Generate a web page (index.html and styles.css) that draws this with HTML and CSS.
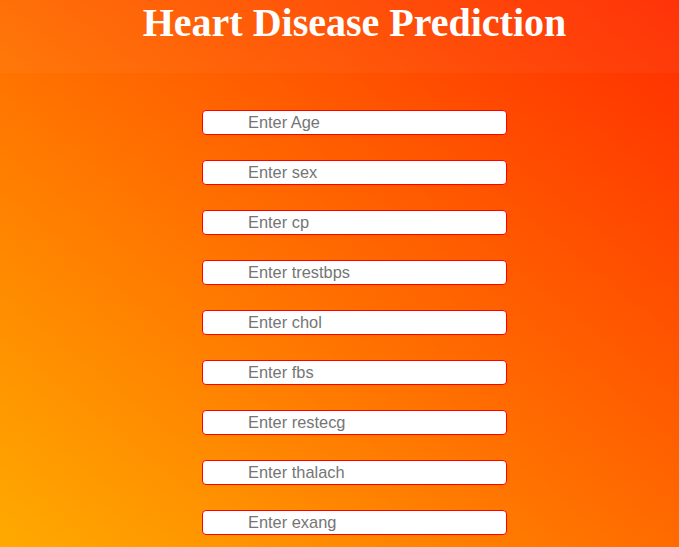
FILE: index.html
```html
<!DOCTYPE html>
<html lang="en">
<head>
<meta charset="utf-8">
<title>Heart Disease Prediction</title>
<link rel="stylesheet" href="styles.css">
</head>
<body>
  <header class="header">
    <h1 class="title">Heart Disease Prediction</h1>
  </header>
  <main class="main">
    <form class="form">
      <input class="field" type="text" placeholder="Enter Age">
      <input class="field" type="text" placeholder="Enter sex">
      <input class="field" type="text" placeholder="Enter cp">
      <input class="field" type="text" placeholder="Enter trestbps">
      <input class="field" type="text" placeholder="Enter chol">
      <input class="field" type="text" placeholder="Enter fbs">
      <input class="field" type="text" placeholder="Enter restecg">
      <input class="field" type="text" placeholder="Enter thalach">
      <input class="field" type="text" placeholder="Enter exang">
      <input class="field" type="text" placeholder="Enter oldpeak">
      <input class="field" type="text" placeholder="Enter slope">
      <input class="field" type="text" placeholder="Enter ca">
      <input class="field" type="text" placeholder="Enter thal">
    </form>
  </main>
</body>
</html>
```
FILE: styles.css
```css
html {
  background: linear-gradient(to top right, #ffaa00, #ff2c00) fixed;
  min-height: 100%;
}
body {
  margin: 0;
  font-family: "Liberation Serif", "Times New Roman", serif;
}
.header {
  height: 73px;
  background: rgba(255, 255, 255, 0.035);
  padding-left: 30px;
  display: flex;
  justify-content: center;
}
.title {
  margin: 0;
  font-size: 40px;
  line-height: 46px;
  font-weight: bold;
  color: #ffffff;
}
.main {
  padding-left: 30px;
  padding-top: 37px;
  padding-bottom: 30px;
}
.form {
  display: flex;
  flex-direction: column;
  align-items: center;
  gap: 25px;
  margin: 0;
}
.field {
  box-sizing: border-box;
  width: 305px;
  height: 25px;
  margin: 0;
  padding: 0 10px 0 45px;
  border: 1px solid #ff0000;
  border-radius: 4px;
  background: #ffffff;
  font-family: "Liberation Sans", Arial, sans-serif;
  font-size: 16.4px;
  color: #333;
  outline: none;
}
.field::placeholder {
  color: #757575;
  opacity: 1;
}
```
